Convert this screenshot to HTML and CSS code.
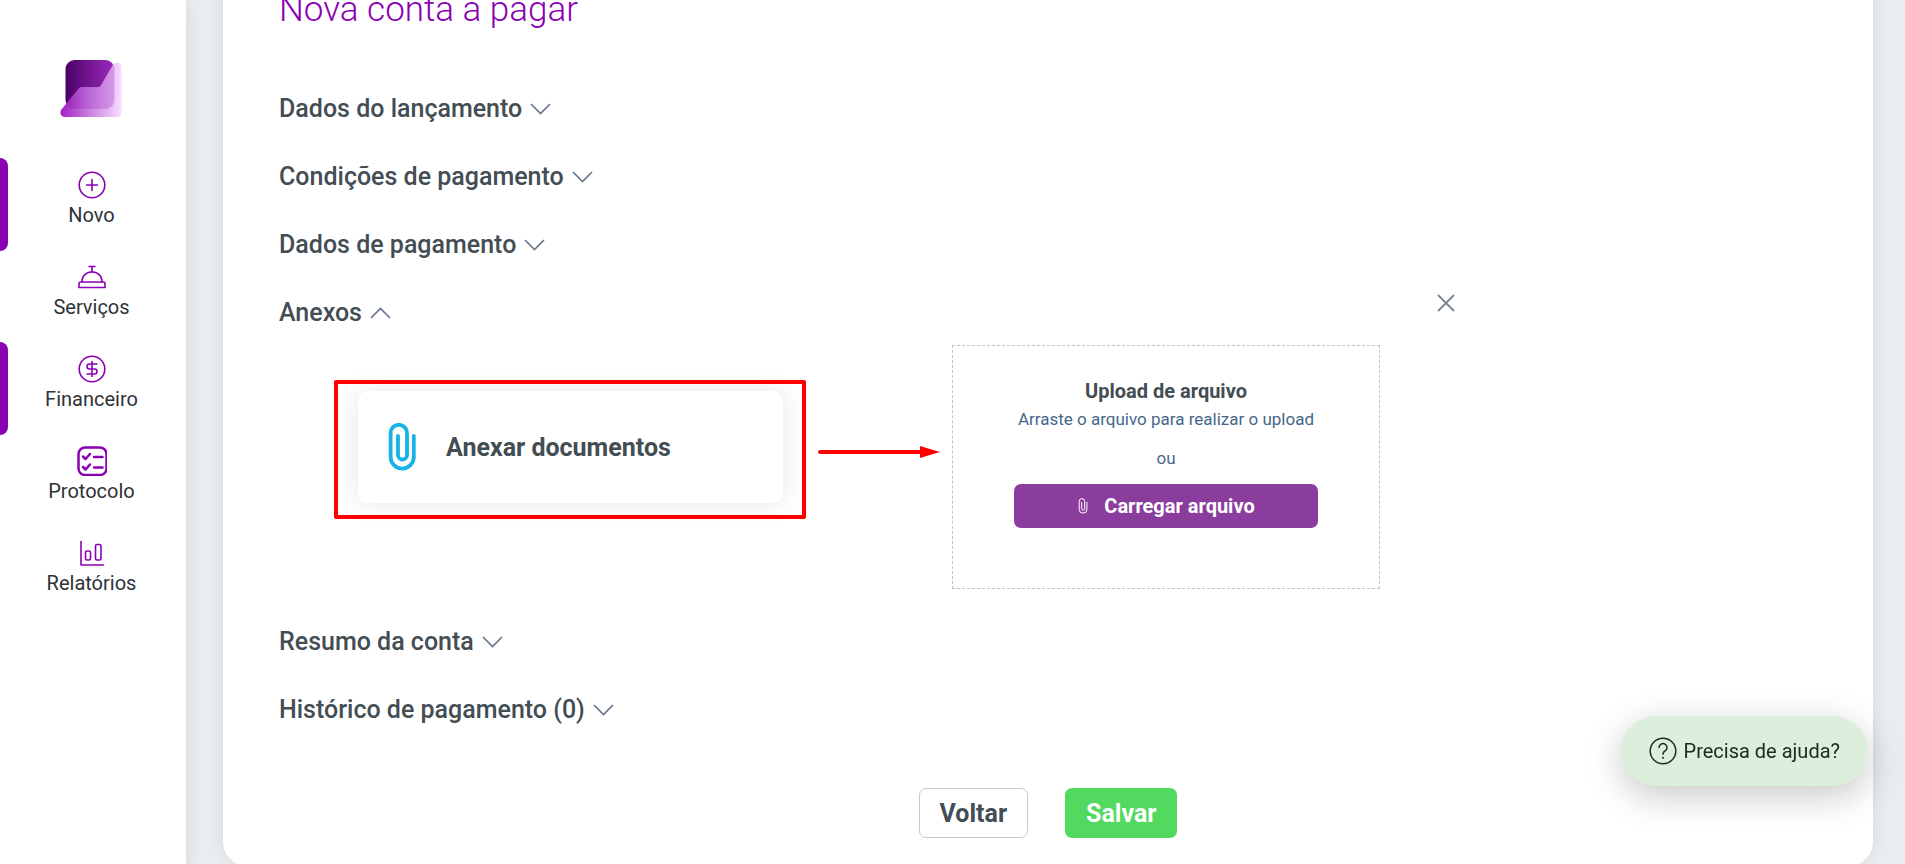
FILE: index.html
```html
<!DOCTYPE html>
<html lang="pt-BR">
<head>
<meta charset="utf-8">
<title>Nova conta a pagar</title>
<link rel="stylesheet" href="styles.css">
</head>
<body>
<svg class="defs" aria-hidden="true">
  <symbol id="chevron" viewBox="0 0 20 12"><path d="M0.5 1 10 10.5 19.5 1"/></symbol>
  <symbol id="clip" viewBox="0 0 28 48"><path d="M10 13V32a4.500 4.500 0 0 0 9 0V10a8.200 8.200 0 0 0-16.400 0V34a11.600 11.600 0 0 0 23.200 0V13"/></symbol>
</svg>
<div class="app">
  <aside class="sidebar">
    <a class="logo" href="#" aria-label="Início">
      <svg width="62" height="58" viewBox="0 0 62 58">
        <defs>
          <linearGradient id="dark" x1="0" x2="1"><stop offset="0" stop-color="#4b0066"/><stop offset="1" stop-color="#9c2bbd"/></linearGradient>
          <linearGradient id="light" x1="0" x2="1"><stop offset="0" stop-color="#a020c4"/><stop offset="0.5" stop-color="#cc85e2"/><stop offset="1" stop-color="#f7dcff"/></linearGradient>
          <linearGradient id="mix" x1="0" x2="1"><stop offset="0" stop-color="#9a22ba"/><stop offset="0.4" stop-color="#b75fd2"/><stop offset="1" stop-color="#d59ae8"/></linearGradient>
          <clipPath id="fold"><path d="M1 50 19 28.500Q20.500 27 22 27L37 27.500Q39.500 27.500 41 25.500L53 5Q54.500 2.500 57 2.500 61.500 2.500 61.500 7V52Q61.500 57 56.500 57H4.500Q-1 55.500 1 50Z"/></clipPath>
        </defs>
        <rect x="5.500" y="0" width="49" height="49" rx="9" fill="url(#dark)"/>
        <path d="M1 50 19 28.500Q20.500 27 22 27L37 27.500Q39.500 27.500 41 25.500L53 5Q54.500 2.500 57 2.500 61.500 2.500 61.500 7V52Q61.500 57 56.500 57H4.500Q-1 55.500 1 50Z" fill="url(#light)"/>
        <rect x="5.500" y="0" width="49" height="49" rx="9" fill="url(#mix)" clip-path="url(#fold)"/>
      </svg>
    </a>
    <nav class="nav">
      <a class="nav-item active" href="#">
        <svg width="30" height="30" viewBox="0 0 30 30"><circle cx="15" cy="15" r="12.800"/><path d="M15 9.500v11M9.500 15h11"/></svg>
        <span>Novo</span>
      </a>
      <a class="nav-item" href="#">
        <svg width="30" height="30" viewBox="0 0 30 30"><path d="M12 4.500h6M15 4.500V10M5 20C5 6.500 25 6.500 25 20M3.500 20h23a1.500 1.500 0 0 1 1.500 1.500V25.500H2V21.500A1.500 1.500 0 0 1 3.500 20Z"/></svg>
        <span>Serviços</span>
      </a>
      <a class="nav-item active" href="#">
        <svg width="30" height="30" viewBox="0 0 30 30"><circle cx="15" cy="15" r="12.800"/><path d="M15 7.500v15M20 10h-7.500a2.500 2.500 0 0 0 0 5h5a2.500 2.500 0 0 1 0 5H10"/></svg>
        <span>Financeiro</span>
      </a>
      <a class="nav-item" href="#">
        <svg class="bold-icon" width="30" height="30" viewBox="0 0 30 30"><rect x="1.500" y="1.500" width="28" height="27.500" rx="6.500"/><path d="M6 10.500 8.500 13 13 8M6 21 8.500 23.500 13 18.500M17 11h8.500M17 21.500h8.500"/></svg>
        <span>Protocolo</span>
      </a>
      <a class="nav-item" href="#">
        <svg width="30" height="30" viewBox="0 0 30 30"><path d="M4 3.500V27h22.500"/><rect x="8.500" y="13" width="5" height="9" rx="1.500"/><rect x="18.500" y="6.500" width="5.500" height="15.500" rx="1.500"/></svg>
        <span>Relatórios</span>
      </a>
    </nav>
  </aside>

  <main class="card">
    <h1 class="title">Nova conta a pagar</h1>
    <div class="sections">
      <button class="section-toggle" type="button">Dados do lançamento<svg class="chevron"><use href="#chevron"/></svg></button>
      <button class="section-toggle" type="button">Condições de pagamento<svg class="chevron"><use href="#chevron"/></svg></button>
      <button class="section-toggle" type="button">Dados de pagamento<svg class="chevron"><use href="#chevron"/></svg></button>
      <section class="attachments">
        <div class="attachments-head">
          <button class="section-toggle open" type="button" aria-expanded="true">Anexos<svg class="chevron"><use href="#chevron"/></svg></button>
          <button class="close" type="button" aria-label="Fechar"><svg width="18" height="18" viewBox="0 0 18 18"><path d="M1 1 17 17M17 1 1 17"/></svg></button>
        </div>
        <div class="attachments-body">
          <div class="highlight">
            <button class="attach" type="button"><svg class="clip"><use href="#clip"/></svg>Anexar documentos</button>
          </div>
          <svg class="arrow" width="122" height="12" viewBox="0 0 122 12"><path d="M2 6H106" stroke="#f00" stroke-width="4" stroke-linecap="round"/><path d="M102 0 122 6 102 12Z" fill="#f00"/></svg>
          <div class="dropzone">
            <strong class="drop-title">Upload de arquivo</strong>
            <span class="drop-text">Arraste o arquivo para realizar o upload</span>
            <span class="drop-or">ou</span>
            <button class="upload" type="button"><svg class="clip-small"><use href="#clip"/></svg>Carregar arquivo</button>
          </div>
        </div>
      </section>
      <button class="section-toggle" type="button">Resumo da conta<svg class="chevron"><use href="#chevron"/></svg></button>
      <button class="section-toggle" type="button">Histórico de pagamento (0)<svg class="chevron"><use href="#chevron"/></svg></button>
    </div>
    <div class="actions">
      <button class="btn btn-back" type="button">Voltar</button>
      <button class="btn btn-save" type="button">Salvar</button>
    </div>
  </main>
</div>
<button class="help" type="button"><svg width="28" height="28" viewBox="0 0 28 28"><circle cx="14" cy="14" r="12.800"/><path d="M10 10.500a4 4 0 1 1 6 3.500q-2 1-2 3.200"/><circle class="dot" cx="14" cy="20.800" r="1"/></svg>Precisa de ajuda?</button>
</body>
</html>
```
FILE: styles.css
```css
* { box-sizing: border-box; }
body {
  margin: 0;
  height: 100vh;
  overflow: hidden;
  background: #e9edf0;
  color: #434d54;
  font-family: Roboto, "Liberation Sans", sans-serif;
}
button { font-family: inherit; cursor: pointer; }
svg { flex: none; }
.defs { display: none; }
.app { display: flex; align-items: flex-start; }

.sidebar {
  flex: none;
  width: 186px;
  height: 100vh;
  padding-top: 60px;
  background: #fff;
  box-shadow: 0 6px 16px rgba(0, 0, 0, 0.1);
}
.logo { display: block; height: 98px; padding-left: 60px; }
.nav { display: flex; flex-direction: column; }
.nav-item {
  position: relative;
  display: flex;
  flex-direction: column;
  align-items: center;
  height: 92px;
  padding: 12px 3px 0 0;
  color: #2e3338;
  font-size: 20px;
  line-height: 30px;
  text-decoration: none;
}
.nav-item.active::before {
  content: "";
  position: absolute;
  left: 0;
  top: 0;
  width: 8px;
  height: 93px;
  background: #8a00b3;
  border-radius: 0 8px 8px 0;
}
.nav-item svg {
  fill: none;
  stroke: #8a00b3;
  stroke-width: 1.6;
  stroke-linecap: round;
  stroke-linejoin: round;
}
.nav-item .bold-icon { stroke-width: 2.5; }

.card {
  flex: 1;
  margin: -72px 32px 0 37px;
  padding: 61px 56px 28px;
  background: #fff;
  border-radius: 24px;
  box-shadow: 0 0 16px rgba(0, 0, 0, 0.09);
}
.title {
  margin: 0 0 63px;
  color: #8a00b3;
  font-size: 35px;
  font-weight: 300;
  line-height: 42px;
}
.sections { display: flex; flex-direction: column; align-items: flex-start; gap: 38px; }
.section-toggle {
  display: flex;
  align-items: center;
  gap: 8px;
  padding: 0;
  border: 0;
  background: none;
  color: #434d54;
  font-size: 25px;
  font-weight: 500;
  line-height: 30px;
}
.chevron { width: 21px; height: 12px; fill: none; stroke: #64748b; stroke-width: 1.6; }
.open .chevron { transform: rotate(180deg); }

.attachments { width: 100%; max-width: 1176px; }
.attachments-head { display: flex; justify-content: space-between; height: 30px; }
.close { display: flex; height: 18px; padding: 0; margin-top: -4px; border: 0; background: none; }
.close svg { fill: none; stroke: #748798; stroke-width: 1.8; }
.attachments-body { display: flex; align-items: flex-start; margin-top: 17px; padding-left: 55px; }
.highlight { position: relative; margin-top: 35px; padding: 11px 23px 16px 24px; }
.highlight::after {
  content: "";
  position: absolute;
  inset: 0;
  border: 4px solid #f00;
  border-radius: 2px;
  pointer-events: none;
}
.attach {
  display: flex;
  align-items: center;
  gap: 30px;
  width: 425px;
  height: 112px;
  padding: 0 30px;
  border: 0;
  border-radius: 10px;
  background: #fff;
  box-shadow: 0 0 28px rgba(0, 0, 0, 0.1);
  color: #434d54;
  font-size: 25px;
  font-weight: 700;
}
.clip { width: 28px; height: 48px; fill: none; stroke: #17b3e6; stroke-width: 3.8; stroke-linecap: round; }
.arrow { margin: 101px 12px 0 12px; }
.dropzone {
  display: flex;
  flex-direction: column;
  align-items: center;
  width: 428px;
  height: 244px;
  padding-top: 31px;
  border: 1px dashed #bcc5ce;
}
.drop-title { font-size: 20px; line-height: 28px; }
.drop-text, .drop-or { color: #45678a; font-size: 17px; line-height: 28px; }
.drop-or { margin: 11px 0 12px; }
.upload {
  display: flex;
  align-items: center;
  justify-content: center;
  gap: 15px;
  width: 304px;
  height: 44px;
  padding: 0;
  border: 0;
  border-radius: 7px;
  background: #8b3d9e;
  color: #fff;
  font-size: 20px;
  font-weight: 700;
}
.clip-small { width: 12px; height: 16px; fill: none; stroke: #fff; stroke-width: 3; stroke-linecap: round; }

.actions { display: flex; justify-content: center; gap: 37px; margin-top: 63px; }
.btn { height: 50px; padding: 0 20px; border: 1px solid transparent; border-radius: 7px; font-size: 25px; font-weight: 700; }
.btn-back { background: #fff; border-color: #c1cad4; color: #434d54; }
.btn-save { background: #52d960; color: #fff; }

.help {
  position: fixed;
  right: 37px;
  bottom: 78px;
  display: flex;
  align-items: center;
  gap: 7px;
  height: 70px;
  padding: 0 28px;
  border: 0;
  border-radius: 35px;
  background: #dbefdc;
  box-shadow: 0 10px 36px rgba(0, 0, 0, 0.22);
  color: #222926;
  font-size: 20px;
}
.help svg { fill: none; stroke: #222926; stroke-width: 1.5; stroke-linecap: round; }
.help .dot { fill: #222926; stroke: none; }
```
